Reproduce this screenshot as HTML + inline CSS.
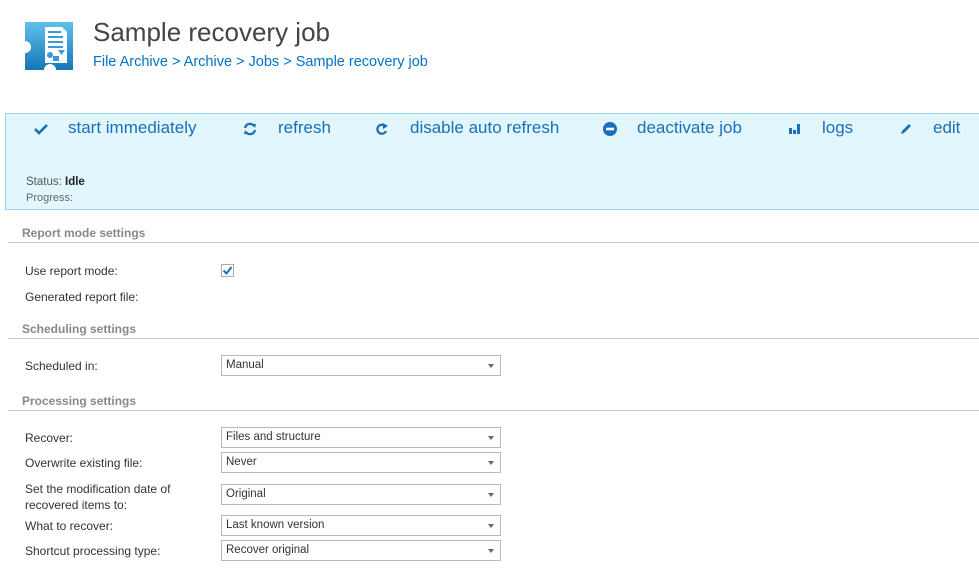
<!DOCTYPE html>
<html><head><meta charset="utf-8"><style>
*{margin:0;padding:0;box-sizing:border-box}
body{width:979px;height:573px;background:#fff;font-family:"Segoe UI","Liberation Sans",sans-serif;position:relative;overflow:hidden;color:#333}
.a{position:absolute;white-space:nowrap}
.t{font-size:26px;color:#444;font-weight:300;left:93px;top:17px}
.bc{font-size:14.5px;color:#0072c6;left:93px;top:54px}
.panel{position:absolute;left:5px;top:113px;width:990px;height:97px;background:#e2f6fd;border:1px solid #9ad7ef}
.btn{font-size:17px;color:#1a6fb8;top:118px}
.ic{top:122px;width:14px;height:14px}
.sec{font-size:12px;font-weight:bold;color:#888;left:22px}
.hr{position:absolute;left:8px;width:971px;height:1px;background:#c6c6c6}
.lbl{font-size:12px;color:#333;left:25px}
.sel{position:absolute;left:221px;width:280px;height:21px;border:1px solid #b9b9b9;font-size:11.5px;padding:3px 0 0 4px;color:#333}
.sel:after{content:"";position:absolute;right:6px;top:8px;border-left:3.5px solid transparent;border-right:3.5px solid transparent;border-top:4px solid #666}
</style></head><body>
<svg class="a" style="left:25px;top:22px" width="48" height="48" viewBox="0 0 48 48">
<defs><linearGradient id="g" x1="0" y1="0" x2="0" y2="1"><stop offset="0" stop-color="#5fc0ea"/><stop offset="1" stop-color="#1677b7"/></linearGradient></defs>
<path d="M0 0H48V48H31A6 6 0 0 0 19 48H0V31A6 6 0 0 0 0 19Z" fill="url(#g)"/>
<path d="M20 5H37L42 10V41H20Z" fill="#fff"/>
<rect x="23" y="9" width="13" height="2" fill="#3a9ad9"/><rect x="23" y="14" width="15" height="2" fill="#3a9ad9"/><rect x="23" y="19" width="15" height="2" fill="#3a9ad9"/><rect x="23" y="24" width="15" height="2" fill="#3a9ad9"/>
<circle cx="25" cy="33" r="3" fill="#3a9ad9"/><rect x="28" y="34" width="6" height="5" fill="#3a9ad9"/><path d="M33 28H40L36.5 33Z" fill="#3a9ad9"/>
</svg>
<div class="a t">Sample recovery job</div>
<div class="a bc">File Archive &gt; Archive &gt; Jobs &gt; Sample recovery job</div>
<div class="panel"></div>
<svg class="a ic" style="left:34px" viewBox="0 0 14 14"><path d="M1 7L5 11L13 3" stroke="#1a6fb8" stroke-width="2.6" fill="none"/></svg>
<div class="a btn" style="left:68px">start immediately</div>
<svg class="a ic" style="left:243px" viewBox="0 0 14 14"><path d="M2 6A5 5 0 0 1 11 4M12 8A5 5 0 0 1 3 10" stroke="#1a6fb8" stroke-width="2.2" fill="none"/><path d="M9 2L13 2L12 6Z M5 12L1 12L2 8Z" fill="#1a6fb8"/></svg>
<div class="a btn" style="left:278px">refresh</div>
<svg class="a ic" style="left:375px" viewBox="0 0 14 14"><path d="M11 9A4.5 4.5 0 1 1 10 4" stroke="#1a6fb8" stroke-width="2.2" fill="none"/><path d="M8 1L13 4L8 7Z" fill="#1a6fb8"/></svg>
<div class="a btn" style="left:410px">disable auto refresh</div>
<svg class="a ic" style="left:603px" viewBox="0 0 14 14"><circle cx="7" cy="7" r="7" fill="#1a6fb8"/><rect x="3" y="5.7" width="8" height="2.6" fill="#fff"/></svg>
<div class="a btn" style="left:637px">deactivate job</div>
<svg class="a ic" style="left:788px" viewBox="0 0 14 14"><rect x="1" y="6" width="3" height="6" fill="#1a6fb8"/><rect x="5" y="8" width="3" height="4" fill="#1a6fb8"/><rect x="9" y="2" width="3" height="10" fill="#1a6fb8"/></svg>
<div class="a btn" style="left:822px">logs</div>
<svg class="a ic" style="left:899px" viewBox="0 0 14 14"><path d="M2 12L3 9L10 2L12 4L5 11Z" fill="#1a6fb8"/></svg>
<div class="a btn" style="left:933px">edit</div>
<div class="a" style="left:26px;top:176px;font-size:11.5px;color:#555">Status: <b style="color:#222">Idle</b></div>
<div class="a" style="left:26px;top:192px;font-size:11px;color:#666">Progress:</div>

<div class="a sec" style="top:226px">Report mode settings</div><div class="hr" style="top:242px"></div>
<div class="a lbl" style="top:264px">Use report mode:</div>
<div class="a" style="left:221px;top:264px;width:13px;height:13px;border:1px solid #aaa;background:#fff"><svg width="11" height="11" viewBox="0 0 11 11" style="display:block"><path d="M1.5 5.5L4.5 8.5L9.5 2" stroke="#1a6fb8" stroke-width="2" fill="none"/></svg></div>
<div class="a lbl" style="top:290px">Generated report file:</div>

<div class="a sec" style="top:322px">Scheduling settings</div><div class="hr" style="top:338px"></div>
<div class="a lbl" style="top:359px">Scheduled in:</div><div class="sel" style="top:355px">Manual</div>

<div class="a sec" style="top:394px">Processing settings</div><div class="hr" style="top:410px"></div>
<div class="a lbl" style="top:431px">Recover:</div><div class="sel" style="top:427px">Files and structure</div>
<div class="a lbl" style="top:456px">Overwrite existing file:</div><div class="sel" style="top:452px">Never</div>
<div class="a lbl" style="top:481px;line-height:16px">Set the modification date of<br>recovered items to:</div><div class="sel" style="top:484px">Original</div>
<div class="a lbl" style="top:519px">What to recover:</div><div class="sel" style="top:515px">Last known version</div>
<div class="a lbl" style="top:544px">Shortcut processing type:</div><div class="sel" style="top:540px">Recover original</div>
</body></html>
